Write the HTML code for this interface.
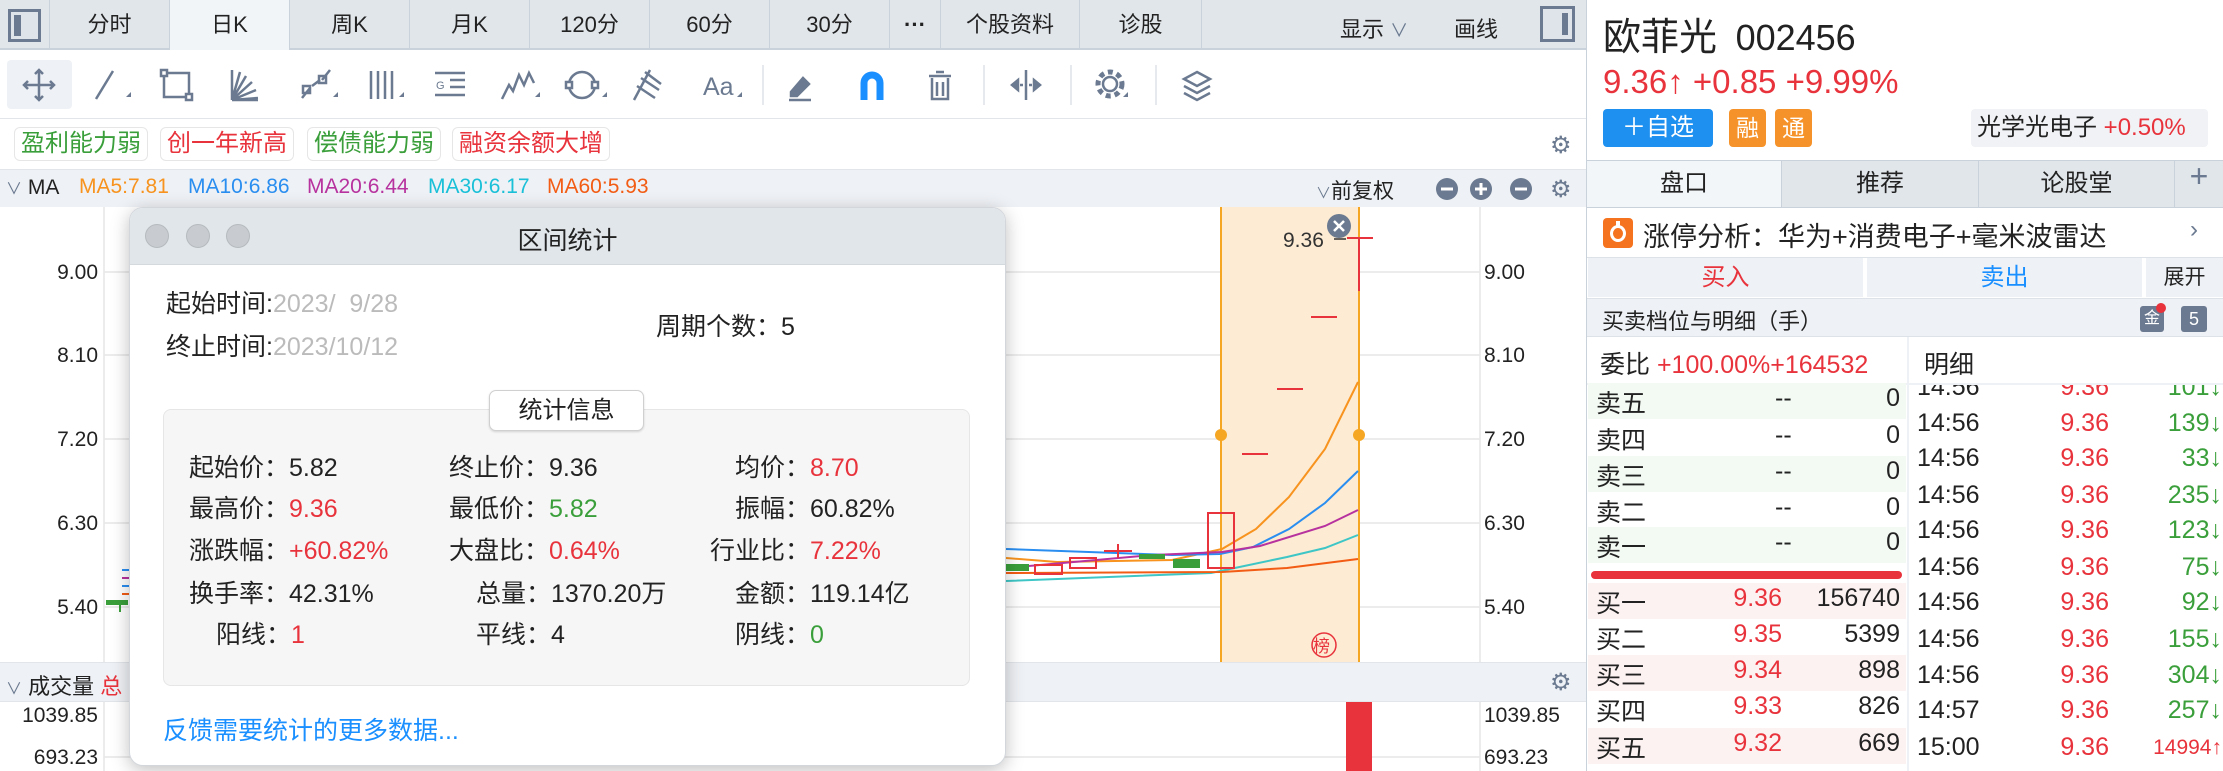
<!DOCTYPE html>
<html><head><meta charset="utf-8"><style>
*{margin:0;padding:0;box-sizing:border-box}
body{width:2223px;height:771px;overflow:hidden;background:#fff;font-family:"Liberation Sans","Noto Sans CJK SC",sans-serif;color:#222;position:relative}
.a{position:absolute;white-space:nowrap}
.tab{position:absolute;top:0;height:50px;line-height:50px;text-align:center;font-size:22px;border-right:1px solid #c9d1da;color:#222}
.r{color:#e8333c}.g{color:#3a9f3a}.b{color:#1a8fff}
.tag{position:absolute;top:127px;height:34px;line-height:32px;font-size:24px;border:1px solid #e6e6e6;border-radius:6px;padding:0 6px;background:#fff}
.dl{font-size:25px}
.row{position:absolute;left:1588px;width:318px;height:36px}
.row span{position:absolute;top:1px;font-size:25px}
.det{position:absolute;font-size:25px}
</style></head><body>

<!-- top tab bar -->
<div class="a" style="left:0;top:0;width:1586px;height:50px;background:#e1e6eb;border-bottom:2px solid #c9d1da"></div>
<div class="a" style="left:8px;top:9px;width:33px;height:33px;border:3px solid #6b7a90;background:#dfe4ea"><div style="position:absolute;left:3px;top:3px;width:7px;height:21px;background:#6b7a90"></div></div>
<div class="tab" style="left:49px;width:121px;border-left:1px solid #c9d1da">分时</div>
<div class="tab" style="left:170px;width:120px;background:#f2f5f8">日K</div>
<div class="tab" style="left:290px;width:120px">周K</div>
<div class="tab" style="left:410px;width:120px">月K</div>
<div class="tab" style="left:530px;width:120px">120分</div>
<div class="tab" style="left:650px;width:120px">60分</div>
<div class="tab" style="left:770px;width:120px">30分</div>
<div class="tab" style="left:890px;width:51px;font-weight:bold">···</div>
<div class="tab" style="left:941px;width:139px">个股资料</div>
<div class="tab" style="left:1080px;width:122px">诊股</div>
<div class="a" style="left:1340px;top:12px;font-size:22px">显示 <span style="color:#6b7a90;font-size:18px">∨</span></div>
<div class="a" style="left:1454px;top:12px;font-size:22px">画线</div>
<div class="a" style="left:1540px;top:6px;width:35px;height:36px;border:3px solid #6b7a90;background:#dfe4ea"><div style="position:absolute;right:4px;top:4px;width:6px;height:22px;background:#6b7a90"></div></div>

<!-- toolbar -->
<div class="a" style="left:7px;top:60px;width:65px;height:49px;background:#eef1f5;border-radius:4px"></div>
<svg class="a" style="left:0;top:50px" width="1586" height="70" viewBox="0 50 1586 70" fill="none" stroke="#6b7a90" stroke-width="2.5">
<path d="M39 70v30M24 85h30M35 74l4-4 4 4M35 96l4 4 4-4M28 81l-4 4 4 4M50 81l4 4-4 4"/>
<path d="M96 99l17-28"/><path d="M126 97l5-5v5z" fill="#6b7a90" stroke="none"/>
<rect x="164" y="73" width="25" height="24"/><rect x="161" y="70" width="6" height="6" fill="#fff"/><rect x="186" y="94" width="6" height="6" fill="#fff"/>
<path d="M232 100V70M232 100l26-2M232 100l24-10M232 100l20-18M232 100l14-24M232 100l8-28M232 100h26"/>
<path d="M302 98l8-10M322 80l8-10M312 86l8-6"/><rect x="303" y="86" width="7" height="7"/><rect x="319" y="76" width="7" height="7"/><path d="M333 97l5-5v5z" fill="#6b7a90" stroke="none"/>
<path d="M371 71v28M378 71v28M385 71v28M392 71v28"/><path d="M399 97l5-5v5z" fill="#6b7a90" stroke="none"/>
<path d="M435 73h30M450 80h15M450 87h15M435 95h30"/><text x="436" y="89" font-size="11" fill="#6b7a90" stroke="none" font-family="Liberation Sans">G</text>
<path d="M502 99l7-14 4 6 6-16 5 10 5-12 5 10"/><path d="M535 97l5-5v5z" fill="#6b7a90" stroke="none"/>
<circle cx="582" cy="85" r="13"/><rect x="566" y="82" width="6" height="6" fill="#fff"/><rect x="592" y="82" width="6" height="6" fill="#fff"/><path d="M602 97l5-5v5z" fill="#6b7a90" stroke="none"/>
<path d="M634 100l16-30M641 78l18 12M645 72l16 12M637 86l18 12"/>
<text x="703" y="95" font-size="25" fill="#6b7a90" stroke="none" font-family="Liberation Sans">Aa</text><path d="M737 97l5-5v5z" fill="#6b7a90" stroke="none"/>
<path d="M763 65v40M984 65v40M1071 65v40M1156 65v40" stroke="#dde2e8" stroke-width="1.5"/>
<path d="M791 92l12-14 6 6-12 12h-6zM789 100h22" fill="#6b7a90"/>
<path d="M864 100V83a8 8 0 0 1 16 0v17" stroke="#1a8fff" stroke-width="7"/>
<path d="M929 76h22M936 72h8M932 78v21h16V78M937 82v14M943 82v14"/>
<path d="M1026 70v30M1012 85l6-5v10zM1040 85l-6-5v10zM1020 85h3M1029 85h3" fill="#6b7a90"/>
<circle cx="1110" cy="84" r="7"/><circle cx="1110" cy="84" r="12" stroke-dasharray="5 4" stroke-width="5"/><path d="M1123 97l5-5v5z" fill="#6b7a90" stroke="none"/>
<path d="M1197 72l13 7-13 7-13-7zM1184 86l13 7 13-7M1184 93l13 7 13-7"/>
</svg>
<div class="a" style="left:0;top:118px;width:1586px;height:1px;background:#e2e6ea"></div>

<!-- tags -->
<div class="tag g" style="left:14px">盈利能力弱</div>
<div class="tag r" style="left:160px">创一年新高</div>
<div class="tag g" style="left:307px">偿债能力弱</div>
<div class="tag r" style="left:452px">融资余额大增</div>
<div class="a" style="left:1550px;top:131px;font-size:24px;color:#6b7a90">⚙</div>

<!-- MA row -->
<div class="a" style="left:0;top:169px;width:1586px;height:38px;background:#eef1f5;border-top:1px solid #e2e6ea"></div>
<div class="a" style="left:6px;top:175px;font-size:21px"><span style="color:#6b7a90;font-size:16px">∨</span> MA</div>
<div class="a" style="left:79px;top:175px;font-size:21px;color:#f7931e">MA5:7.81</div>
<div class="a" style="left:188px;top:175px;font-size:21px;color:#2a8ef0">MA10:6.86</div>
<div class="a" style="left:307px;top:175px;font-size:21px;color:#b7329e">MA20:6.44</div>
<div class="a" style="left:428px;top:175px;font-size:21px;color:#19c0d8">MA30:6.17</div>
<div class="a" style="left:547px;top:175px;font-size:21px;color:#f25c14">MA60:5.93</div>
<div class="a" style="left:1316px;top:175px;font-size:21px"><span style="color:#6b7a90;font-size:15px">∨</span>前复权</div>
<svg class="a" style="left:1430px;top:176px" width="150" height="26">
<circle cx="17" cy="13" r="11" fill="#6b7a90"/><path d="M11 13h12" stroke="#fff" stroke-width="3"/>
<circle cx="51" cy="13" r="11" fill="#6b7a90"/><path d="M45 13h12M51 7v12" stroke="#fff" stroke-width="3"/>
<circle cx="91" cy="13" r="11" fill="#6b7a90"/><path d="M85 13h12" stroke="#fff" stroke-width="3"/>
</svg>
<div class="a" style="left:1550px;top:175px;font-size:24px;color:#6b7a90">⚙</div>

<!-- chart -->
<svg class="a" style="left:0;top:0" width="1586" height="771" viewBox="0 0 1586 771" fill="none">
<g stroke="#e6e6e6" stroke-width="1.5"><path d="M104 272H1480M104 355H1480M104 439H1480M104 523H1480M104 607H1480M104 757H1480"/><path d="M104 207V771M1480 207V771"/></g>
<rect x="1221" y="207" width="138" height="455" fill="#fdebd3"/>
<path d="M1221 207V662M1359 207V662" stroke="#f5a623" stroke-width="2"/>
<circle cx="1221" cy="435" r="6" fill="#f5a623"/><circle cx="1359" cy="435" r="6" fill="#f5a623"/>
<polyline points="1006,558 1057,562 1172,560 1222,549 1256,529 1289,497 1325,449 1358,382" stroke="#f7931e" stroke-width="2"/>
<polyline points="1006,549 1172,555 1220,554 1253,547 1289,529 1325,503 1358,471" stroke="#2a8ef0" stroke-width="2"/>
<polyline points="1006,568 1153,555 1222,552 1260,546 1325,526 1358,510" stroke="#b7329e" stroke-width="2"/>
<polyline points="1006,581 1211,573 1230,569 1287,557 1325,548 1358,535" stroke="#3ec6c6" stroke-width="2"/>
<polyline points="1006,573 1222,572 1287,568 1358,559" stroke="#f25c14" stroke-width="2"/>
<rect x="1006" y="564" width="23" height="7" fill="#3a9f3a"/>
<rect x="1035" y="565" width="27" height="9" stroke="#e8333c" stroke-width="2"/>
<rect x="1070" y="558" width="26" height="10" stroke="#e8333c" stroke-width="2"/>
<path d="M1104 551h28M1118 544v14" stroke="#e8333c" stroke-width="2"/>
<rect x="1139" y="554" width="26" height="5" fill="#3a9f3a"/>
<rect x="1173" y="559" width="27" height="9" fill="#3a9f3a"/>
<rect x="1208" y="513" width="26" height="55" stroke="#e8333c" stroke-width="2"/>
<path d="M1242 454h26M1277 389h26M1311 317h26M1347 238h26M1359 238v53" stroke="#e8333c" stroke-width="2"/>
<path d="M1334 239h12" stroke="#333" stroke-width="1.5"/>
<text x="1283" y="247" font-size="21" fill="#333" font-family="Liberation Sans">9.36</text>
<circle cx="1339" cy="226" r="12" fill="#6b7a90"/><path d="M1334 221l10 10M1344 221l-10 10" stroke="#fff" stroke-width="2.5"/>
<circle cx="1324" cy="645" r="12" stroke="#e8333c" stroke-width="1.5"/>
<text x="1313" y="652" font-size="17" fill="#e8333c" font-family="Noto Sans CJK SC">榜</text>
<rect x="1346" y="702" width="26" height="69" fill="#e8333c"/>
<rect x="106" y="600" width="22" height="5" fill="#3a9f3a"/>
<path d="M120 604v8" stroke="#3a9f3a" stroke-width="2"/>
<path d="M122 570h8M122 578h8M122 586h8M122 594h8" stroke="#2a8ef0" stroke-width="2"/>
<path d="M122 578h8" stroke="#b7329e" stroke-width="2"/><path d="M122 594h8" stroke="#f25c14" stroke-width="2"/>
<g font-family="Liberation Sans" font-size="21" fill="#222">
<text x="98" y="279" text-anchor="end">9.00</text><text x="98" y="362" text-anchor="end">8.10</text><text x="98" y="446" text-anchor="end">7.20</text><text x="98" y="530" text-anchor="end">6.30</text><text x="98" y="614" text-anchor="end">5.40</text>
<text x="98" y="722" text-anchor="end">1039.85</text><text x="98" y="764" text-anchor="end">693.23</text>
<text x="1484" y="279">9.00</text><text x="1484" y="362">8.10</text><text x="1484" y="446">7.20</text><text x="1484" y="530">6.30</text><text x="1484" y="614">5.40</text>
<text x="1484" y="722">1039.85</text><text x="1484" y="764">693.23</text>
</g>
</svg>
<div class="a" style="left:0;top:662px;width:1586px;height:40px;background:#eef1f5;border-top:1px solid #e2e6ea;border-bottom:1px solid #e2e6ea"></div>
<div class="a" style="left:6px;top:669px;font-size:22px"><span style="color:#6b7a90;font-size:16px">∨</span> 成交量 <span class="r">总</span></div>
<div class="a" style="left:1550px;top:668px;font-size:24px;color:#6b7a90">⚙</div>

<!-- dialog -->
<div class="a" style="left:129px;top:207px;width:877px;height:559px;background:#fff;border-radius:14px;border:1px solid #d3d7dc;box-shadow:0 4px 18px rgba(0,0,0,.25);overflow:hidden">
 <div style="position:absolute;left:0;top:0;width:100%;height:57px;background:#e1e6ea;border-bottom:1px solid #d4d9de"></div>
 <div style="position:absolute;left:15px;top:16px;width:24px;height:24px;border-radius:50%;background:#c8ccd0;border:1px solid #b5babf"></div>
 <div style="position:absolute;left:56px;top:16px;width:24px;height:24px;border-radius:50%;background:#c8ccd0;border:1px solid #b5babf"></div>
 <div style="position:absolute;left:96px;top:16px;width:24px;height:24px;border-radius:50%;background:#c8ccd0;border:1px solid #b5babf"></div>
 <div style="position:absolute;left:0;width:100%;top:13px;text-align:center;font-size:25px">区间统计</div>
</div>
<div class="a dl" style="left:166px;top:284px">起始时间:<span style="color:#bbb">2023/&nbsp; 9/28</span></div>
<div class="a dl" style="left:166px;top:327px">终止时间:<span style="color:#bbb">2023/10/12</span></div>
<div class="a dl" style="left:656px;top:307px">周期个数：5</div>
<div class="a" style="left:163px;top:409px;width:807px;height:277px;background:#f6f6f6;border:1px solid #e6e6e6;border-radius:8px"></div>
<div class="a" style="left:489px;top:390px;width:155px;height:41px;background:#fff;border:1px solid #d0d0d0;border-radius:7px;box-shadow:0 1px 2px rgba(0,0,0,.15);text-align:center;line-height:39px;font-size:24px">统计信息</div>
<div class="a dl" style="left:189px;top:448px">起始价：5.82</div>
<div class="a dl" style="left:449px;top:448px">终止价：9.36</div>
<div class="a dl" style="left:735px;top:448px">均价：<span class="r">8.70</span></div>
<div class="a dl" style="left:189px;top:489px">最高价：<span class="r">9.36</span></div>
<div class="a dl" style="left:449px;top:489px">最低价：<span class="g">5.82</span></div>
<div class="a dl" style="left:735px;top:489px">振幅：60.82%</div>
<div class="a dl" style="left:189px;top:531px">涨跌幅：<span class="r">+60.82%</span></div>
<div class="a dl" style="left:449px;top:531px">大盘比：<span class="r">0.64%</span></div>
<div class="a dl" style="left:710px;top:531px">行业比：<span class="r">7.22%</span></div>
<div class="a dl" style="left:189px;top:574px">换手率：42.31%</div>
<div class="a dl" style="left:476px;top:574px">总量：1370.20万</div>
<div class="a dl" style="left:735px;top:574px">金额：119.14亿</div>
<div class="a dl" style="left:216px;top:615px">阳线：<span class="r">1</span></div>
<div class="a dl" style="left:476px;top:615px">平线：4</div>
<div class="a dl" style="left:735px;top:615px">阴线：<span class="g">0</span></div>
<div class="a dl b" style="left:163px;top:711px">反馈需要统计的更多数据...</div>

<!-- right panel -->
<div class="a" style="left:1586px;top:0;width:1px;height:771px;background:#c9d1da"></div>
<div class="a" style="left:1603px;top:6px;font-size:38px">欧菲光 <span style="font-size:36px;margin-left:8px">002456</span></div>
<div class="a r" style="left:1603px;top:63px;font-size:33px">9.36↑ +0.85 +9.99%</div>
<div class="a" style="left:1603px;top:109px;width:110px;height:38px;background:#1e90f0;border-radius:4px;color:#fff;font-size:24px;text-align:center;line-height:38px">＋自选</div>
<div class="a" style="left:1729px;top:109px;width:37px;height:38px;background:#f5932a;border-radius:4px;color:#fff;font-size:23px;text-align:center;line-height:38px">融</div>
<div class="a" style="left:1775px;top:109px;width:37px;height:38px;background:#f5932a;border-radius:4px;color:#fff;font-size:23px;text-align:center;line-height:38px">通</div>
<div class="a" style="left:1971px;top:109px;width:237px;height:38px;background:#f0f2f5;border-radius:4px;font-size:24px;line-height:38px;padding-left:6px">光学光电子 <span class="r">+0.50%</span></div>
<div class="a" style="left:1587px;top:160px;width:636px;height:48px;background:#e1e6eb;border-top:1px solid #c9d1da;border-bottom:1px solid #c9d1da"></div>
<div class="a" style="left:1587px;top:161px;width:195px;height:46px;background:#f3f6f9;text-align:center;line-height:46px;font-size:24px;border-right:1px solid #c9d1da">盘口</div>
<div class="a" style="left:1782px;top:161px;width:197px;height:46px;text-align:center;line-height:46px;font-size:24px;border-right:1px solid #c9d1da">推荐</div>
<div class="a" style="left:1979px;top:161px;width:196px;height:46px;text-align:center;line-height:46px;font-size:24px;border-right:1px solid #c9d1da">论股堂</div>
<div class="a" style="left:2175px;top:158px;width:48px;text-align:center;font-size:32px;color:#6b7a90">+</div>
<div class="a" style="left:1603px;top:218px;width:30px;height:30px;background:#f5731e;border-radius:4px"><div style="position:absolute;left:7px;top:7px;width:16px;height:17px;border-radius:50%;border:3px solid #fff;border-left-color:#fff"></div><div style="position:absolute;left:13px;top:3px;width:4px;height:6px;background:#fff"></div></div>
<div class="a" style="left:1643px;top:215px;font-size:27px">涨停分析：华为+消费电子+毫米波雷达</div>
<div class="a" style="left:2190px;top:216px;font-size:24px;color:#6b7a90">›</div>
<div class="a" style="left:1587px;top:257px;width:636px;height:1px;background:#dde2e8"></div>
<div class="a" style="left:1588px;top:258px;width:277px;height:39px;background:#eef1f5;border-right:2px solid #fff;text-align:center;line-height:39px;font-size:24px;color:#e8333c">买入</div>
<div class="a" style="left:1867px;top:258px;width:277px;height:39px;background:#eef1f5;border-right:2px solid #fff;text-align:center;line-height:39px;font-size:24px;color:#1a8fff">卖出</div>
<div class="a" style="left:2146px;top:258px;width:77px;height:39px;background:#eef1f5;text-align:center;line-height:39px;font-size:21px">展开</div>
<div class="a" style="left:1587px;top:298px;width:636px;height:39px;background:#eef1f5;border-top:1px solid #dde2e8;border-bottom:1px solid #dde2e8"></div>
<div class="a" style="left:1602px;top:304px;font-size:22px">买卖档位与明细（手）</div>
<div class="a" style="left:2140px;top:306px;width:24px;height:26px;background:#6b7a90;border-radius:3px;color:#fff;font-size:16px;text-align:center;line-height:26px">金</div>
<div class="a" style="left:2156px;top:303px;width:10px;height:10px;border-radius:50%;background:#e8333c"></div>
<div class="a" style="left:2181px;top:306px;width:26px;height:26px;background:#6b7a90;border-radius:3px;color:#fff;font-size:18px;text-align:center;line-height:26px">5</div>
<div class="a" style="left:1907px;top:337px;width:2px;height:434px;background:#eef1f5"></div>
<div class="a" style="left:1587px;top:383px;width:636px;height:2px;background:#eef1f5"></div>
<div class="a" style="left:1600px;top:345px;font-size:25px">委比 <span class="r">+100.00%</span><span class="r">+164532</span></div>
<div class="a" style="left:1924px;top:345px;font-size:25px">明细</div>
<div class="row" style="top:383px;background:#f3f9f3"><span style="left:8px">卖五</span><span style="left:187px">--</span><span style="right:6px">0</span></div>
<div class="row" style="top:420px"><span style="left:8px">卖四</span><span style="left:187px">--</span><span style="right:6px">0</span></div>
<div class="row" style="top:456px;background:#f3f9f3"><span style="left:8px">卖三</span><span style="left:187px">--</span><span style="right:6px">0</span></div>
<div class="row" style="top:492px"><span style="left:8px">卖二</span><span style="left:187px">--</span><span style="right:6px">0</span></div>
<div class="row" style="top:527px;background:#f3f9f3"><span style="left:8px">卖一</span><span style="left:187px">--</span><span style="right:6px">0</span></div>
<div class="a" style="left:1591px;top:571px;width:311px;height:8px;border-radius:4px;background:#e8333c"></div>
<div class="row" style="top:583px;background:#fdf2f2"><span style="left:8px">买一</span><span class="r" style="right:124px">9.36</span><span style="right:6px">156740</span></div>
<div class="row" style="top:619px"><span style="left:8px">买二</span><span class="r" style="right:124px">9.35</span><span style="right:6px">5399</span></div>
<div class="row" style="top:655px;background:#fdf2f2"><span style="left:8px">买三</span><span class="r" style="right:124px">9.34</span><span style="right:6px">898</span></div>
<div class="row" style="top:691px"><span style="left:8px">买四</span><span class="r" style="right:124px">9.33</span><span style="right:6px">826</span></div>
<div class="row" style="top:728px;background:#fdf2f2"><span style="left:8px">买五</span><span class="r" style="right:124px">9.32</span><span style="right:6px">669</span></div>

<div style="position:absolute;left:1909px;top:385px;width:314px;height:386px;overflow:hidden">
<div style="position:absolute;left:0;top:-12px;width:314px">
<div class="det" style="top:0;left:8px">14:56</div><div class="det r" style="top:0;right:114px">9.36</div><div class="det g" style="top:0;right:1px">101↓</div>
<div class="det" style="top:36px;left:8px">14:56</div><div class="det r" style="top:36px;right:114px">9.36</div><div class="det g" style="top:36px;right:1px">139↓</div>
<div class="det" style="top:71px;left:8px">14:56</div><div class="det r" style="top:71px;right:114px">9.36</div><div class="det g" style="top:71px;right:1px">33↓</div>
<div class="det" style="top:108px;left:8px">14:56</div><div class="det r" style="top:108px;right:114px">9.36</div><div class="det g" style="top:108px;right:1px">235↓</div>
<div class="det" style="top:143px;left:8px">14:56</div><div class="det r" style="top:143px;right:114px">9.36</div><div class="det g" style="top:143px;right:1px">123↓</div>
<div class="det" style="top:180px;left:8px">14:56</div><div class="det r" style="top:180px;right:114px">9.36</div><div class="det g" style="top:180px;right:1px">75↓</div>
<div class="det" style="top:215px;left:8px">14:56</div><div class="det r" style="top:215px;right:114px">9.36</div><div class="det g" style="top:215px;right:1px">92↓</div>
<div class="det" style="top:252px;left:8px">14:56</div><div class="det r" style="top:252px;right:114px">9.36</div><div class="det g" style="top:252px;right:1px">155↓</div>
<div class="det" style="top:288px;left:8px">14:56</div><div class="det r" style="top:288px;right:114px">9.36</div><div class="det g" style="top:288px;right:1px">304↓</div>
<div class="det" style="top:323px;left:8px">14:57</div><div class="det r" style="top:323px;right:114px">9.36</div><div class="det g" style="top:323px;right:1px">257↓</div>
<div class="det" style="top:360px;left:8px">15:00</div><div class="det r" style="top:360px;right:114px">9.36</div><div class="det r" style="top:363px;right:1px;font-size:21px">14994↑</div>
</div></div>
</body></html>
